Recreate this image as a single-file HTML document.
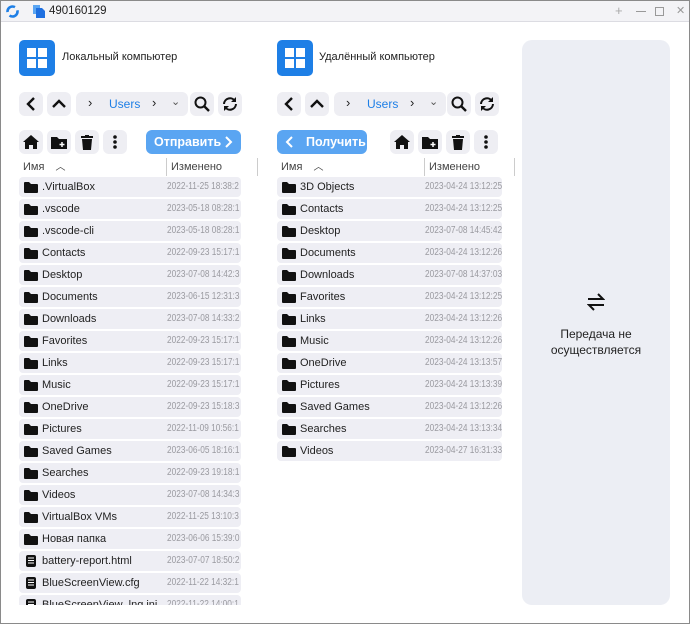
<!DOCTYPE html>
<html><head><meta charset="utf-8"><style>
*{box-sizing:border-box;margin:0;padding:0}
body{width:690px;height:624px;background:#fff;font-family:"Liberation Sans","Noto Sans CJK SC",sans-serif;position:relative;overflow:hidden;color:#222}
.win{position:absolute;left:0;top:0;width:690px;height:624px;border:1px solid #8a8a8a}
.title{position:absolute;left:1px;top:1px;width:688px;height:21px;background:#f3f3f6;border-bottom:1px solid #dcdce2}
.a{position:absolute}
.btn{position:absolute;width:24px;height:24px;background:#eeeef3;border-radius:6px;display:flex;align-items:center;justify-content:center}
.crumb{position:absolute;height:24px;background:#eeeef3;border-radius:6px}
.list{position:absolute;top:177px;height:428px;overflow:hidden}
.row{height:20px;margin-bottom:2px;background:#eeeef4;border-radius:4px;position:relative;font-size:11px;line-height:20px;white-space:nowrap;overflow:hidden}
.row .n{position:absolute;left:23px;color:#222}
.row .d{position:absolute;color:#9a9aa0;font-size:10px;transform:scaleX(0.83);transform-origin:0 50%}
.row svg{position:absolute;left:5px;top:5px}
.hdr{position:absolute;top:158px;height:18px;font-size:11px;color:#444;line-height:18px}
.send{position:absolute;height:24px;background:#5aa5f2;border-radius:6px;color:#fff;font-size:12.5px;font-weight:bold;line-height:24px}
</style></head><body>
<div class="win"></div>
<div class="title">
 <svg class="a" style="left:5px;top:4px" width="13" height="13" viewBox="0 0 13 13"><circle cx="6.5" cy="6.5" r="5" fill="none" stroke="#1e7fe6" stroke-width="2.6" stroke-dasharray="11 4"/></svg>
 <svg class="a" style="left:32px;top:4px" width="12" height="13" viewBox="0 0 12 13"><rect x="0" y="0" width="7" height="9" fill="#5aa5f2"/><path d="M3 3h6l3 3v7H3z" fill="#1e6fe0"/></svg>
 <div class="a" style="left:48px;top:4px;font-size:11.5px;color:#222">490160129</div>
 <div class="a" style="left:614px;top:2px;font-size:13px;color:#aaa">+</div>
 <div class="a" style="left:635px;top:10px;width:10px;height:1px;background:#999"></div>
 <div class="a" style="left:654px;top:6px;width:9px;height:9px;border:1px solid #999"></div>
 <div class="a" style="left:675px;top:3px;font-size:11px;color:#999">✕</div>
</div>

<div class="a" style="left:19px;top:40px;width:36px;height:36px;background:#1e7fe6;border-radius:5px"></div>
<svg class="a" style="left:27px;top:48px" width="20" height="20" viewBox="0 0 20 20" fill="#fff"><rect x="0" y="0" width="9" height="9"/><rect x="11" y="0" width="9" height="9"/><rect x="0" y="11" width="9" height="9"/><rect x="11" y="11" width="9" height="9"/></svg>
<div class="a" style="left:62px;top:51px;font-size:11px">Локальный компьютер</div>

<div class="a" style="left:277px;top:40px;width:36px;height:36px;background:#1e7fe6;border-radius:5px"></div>
<svg class="a" style="left:285px;top:48px" width="20" height="20" viewBox="0 0 20 20" fill="#fff"><rect x="0" y="0" width="9" height="9"/><rect x="11" y="0" width="9" height="9"/><rect x="0" y="11" width="9" height="9"/><rect x="11" y="11" width="9" height="9"/></svg>
<div class="a" style="left:319px;top:51px;font-size:11px">Удалённый компьютер</div>

<div class="btn" style="left:19px;top:92px"><svg width="12" height="14" viewBox="0 0 12 14"><path d="M9 1L3 7l6 6" fill="none" stroke="#111" stroke-width="2.4"/></svg></div>
<div class="btn" style="left:47px;top:92px"><svg width="14" height="12" viewBox="0 0 14 12"><path d="M1 9l6-6 6 6" fill="none" stroke="#111" stroke-width="2.4"/></svg></div>
<div class="crumb" style="left:76px;top:92px;width:112px"><span class="a" style="left:12px;top:3px;font-size:13px">›</span><span class="a" style="left:33px;top:5px;font-size:12px;color:#1e7fe6">Users</span><span class="a" style="left:76px;top:3px;font-size:13px">›</span><span class="a" style="left:95px;top:3px;font-size:11px;color:#555">⌄</span></div>
<div class="btn" style="left:190px;top:92px"><svg width="16" height="16" viewBox="0 0 16 16"><circle cx="6.5" cy="6.5" r="5" fill="none" stroke="#111" stroke-width="2"/><path d="M10 10l5 5" stroke="#111" stroke-width="2.4"/></svg></div>
<div class="btn" style="left:218px;top:92px"><svg width="16" height="16" viewBox="0 0 16 16"><path d="M2 8a6 6 0 0 1 11-3M14 8a6 6 0 0 1-11 3" fill="none" stroke="#111" stroke-width="2"/><path d="M14 1v5h-5M2 15v-5h5" fill="#111"/></svg></div>

<div class="btn" style="left:277px;top:92px"><svg width="12" height="14" viewBox="0 0 12 14"><path d="M9 1L3 7l6 6" fill="none" stroke="#111" stroke-width="2.4"/></svg></div>
<div class="btn" style="left:305px;top:92px"><svg width="14" height="12" viewBox="0 0 14 12"><path d="M1 9l6-6 6 6" fill="none" stroke="#111" stroke-width="2.4"/></svg></div>
<div class="crumb" style="left:334px;top:92px;width:112px"><span class="a" style="left:12px;top:3px;font-size:13px">›</span><span class="a" style="left:33px;top:5px;font-size:12px;color:#1e7fe6">Users</span><span class="a" style="left:76px;top:3px;font-size:13px">›</span><span class="a" style="left:95px;top:3px;font-size:11px;color:#555">⌄</span></div>
<div class="btn" style="left:447px;top:92px"><svg width="16" height="16" viewBox="0 0 16 16"><circle cx="6.5" cy="6.5" r="5" fill="none" stroke="#111" stroke-width="2"/><path d="M10 10l5 5" stroke="#111" stroke-width="2.4"/></svg></div>
<div class="btn" style="left:475px;top:92px"><svg width="16" height="16" viewBox="0 0 16 16"><path d="M2 8a6 6 0 0 1 11-3M14 8a6 6 0 0 1-11 3" fill="none" stroke="#111" stroke-width="2"/><path d="M14 1v5h-5M2 15v-5h5" fill="#111"/></svg></div>

<div class="btn" style="left:19px;top:130px"><svg width="16" height="14" viewBox="0 0 16 14"><path d="M8 0L0 7h2v7h4v-4h4v4h4V7h2z" fill="#111"/></svg></div>
<div class="btn" style="left:47px;top:130px"><svg width="16" height="13" viewBox="0 0 16 13"><path d="M0 1h6l2 2h8v10H0z" fill="#111"/><path d="M11 6v5M8.5 8.5h5" stroke="#fff" stroke-width="1.5"/></svg></div>
<div class="btn" style="left:75px;top:130px"><svg width="12" height="15" viewBox="0 0 12 15"><rect x="0" y="1" width="12" height="2" fill="#111"/><rect x="4" y="0" width="4" height="2" fill="#111"/><path d="M1 4h10l-1 11H2z" fill="#111"/></svg></div>
<div class="btn" style="left:103px;top:130px"><svg width="4" height="14" viewBox="0 0 4 14" fill="#111"><circle cx="2" cy="2" r="1.8"/><circle cx="2" cy="7" r="1.8"/><circle cx="2" cy="12" r="1.8"/></svg></div>
<div class="send" style="left:146px;top:130px;width:95px"><span class="a" style="left:8px">Отправить</span><svg class="a" style="left:79px;top:6px" width="8" height="12" viewBox="0 0 8 12"><path d="M1 1l5 5-5 5" fill="none" stroke="#fff" stroke-width="2"/></svg></div>

<div class="send" style="left:277px;top:130px;width:90px"><svg class="a" style="left:8px;top:6px" width="8" height="12" viewBox="0 0 8 12"><path d="M7 1L2 6l5 5" fill="none" stroke="#fff" stroke-width="2"/></svg><span class="a" style="left:29px">Получить</span></div>
<div class="btn" style="left:390px;top:130px"><svg width="16" height="14" viewBox="0 0 16 14"><path d="M8 0L0 7h2v7h4v-4h4v4h4V7h2z" fill="#111"/></svg></div>
<div class="btn" style="left:418px;top:130px"><svg width="16" height="13" viewBox="0 0 16 13"><path d="M0 1h6l2 2h8v10H0z" fill="#111"/><path d="M11 6v5M8.5 8.5h5" stroke="#fff" stroke-width="1.5"/></svg></div>
<div class="btn" style="left:446px;top:130px"><svg width="12" height="15" viewBox="0 0 12 15"><rect x="0" y="1" width="12" height="2" fill="#111"/><rect x="4" y="0" width="4" height="2" fill="#111"/><path d="M1 4h10l-1 11H2z" fill="#111"/></svg></div>
<div class="btn" style="left:474px;top:130px"><svg width="4" height="14" viewBox="0 0 4 14" fill="#111"><circle cx="2" cy="2" r="1.8"/><circle cx="2" cy="7" r="1.8"/><circle cx="2" cy="12" r="1.8"/></svg></div>

<div class="hdr" style="left:23px">Имя <span style="font-size:10px;margin-left:8px">︿</span></div>
<div class="a" style="left:166px;top:158px;width:1px;height:18px;background:#ccc"></div>
<div class="hdr" style="left:171px">Изменено</div>
<div class="a" style="left:257px;top:158px;width:1px;height:18px;background:#ccc"></div>
<div class="hdr" style="left:281px">Имя <span style="font-size:10px;margin-left:8px">︿</span></div>
<div class="a" style="left:424px;top:158px;width:1px;height:18px;background:#ccc"></div>
<div class="hdr" style="left:429px">Изменено</div>
<div class="a" style="left:514px;top:158px;width:1px;height:18px;background:#ccc"></div>

<svg width="0" height="0" style="position:absolute"><defs>
<symbol id="f" viewBox="0 0 14 11"><path d="M0 1q0-1 1-1h4l2 2h6q1 0 1 1v7q0 1-1 1H1q-1 0-1-1z" fill="#111"/></symbol>
<symbol id="doc" viewBox="0 0 10 12"><rect x="0" y="0" width="10" height="12" rx="2" fill="#111"/><path d="M2 3h6M2 5.5h6M2 8h6" stroke="#fff" stroke-width="1"/></symbol>
</defs></svg>

<div class="list" style="left:19px;width:222px">
<div class="row"><svg width="14" height="11"><use href="#f"/></svg><span class="n">.VirtualBox</span><span class="d" style="left:148px">2022-11-25 18:38:2</span></div>
<div class="row"><svg width="14" height="11"><use href="#f"/></svg><span class="n">.vscode</span><span class="d" style="left:148px">2023-05-18 08:28:1</span></div>
<div class="row"><svg width="14" height="11"><use href="#f"/></svg><span class="n">.vscode-cli</span><span class="d" style="left:148px">2023-05-18 08:28:1</span></div>
<div class="row"><svg width="14" height="11"><use href="#f"/></svg><span class="n">Contacts</span><span class="d" style="left:148px">2022-09-23 15:17:1</span></div>
<div class="row"><svg width="14" height="11"><use href="#f"/></svg><span class="n">Desktop</span><span class="d" style="left:148px">2023-07-08 14:42:3</span></div>
<div class="row"><svg width="14" height="11"><use href="#f"/></svg><span class="n">Documents</span><span class="d" style="left:148px">2023-06-15 12:31:3</span></div>
<div class="row"><svg width="14" height="11"><use href="#f"/></svg><span class="n">Downloads</span><span class="d" style="left:148px">2023-07-08 14:33:2</span></div>
<div class="row"><svg width="14" height="11"><use href="#f"/></svg><span class="n">Favorites</span><span class="d" style="left:148px">2022-09-23 15:17:1</span></div>
<div class="row"><svg width="14" height="11"><use href="#f"/></svg><span class="n">Links</span><span class="d" style="left:148px">2022-09-23 15:17:1</span></div>
<div class="row"><svg width="14" height="11"><use href="#f"/></svg><span class="n">Music</span><span class="d" style="left:148px">2022-09-23 15:17:1</span></div>
<div class="row"><svg width="14" height="11"><use href="#f"/></svg><span class="n">OneDrive</span><span class="d" style="left:148px">2022-09-23 15:18:3</span></div>
<div class="row"><svg width="14" height="11"><use href="#f"/></svg><span class="n">Pictures</span><span class="d" style="left:148px">2022-11-09 10:56:1</span></div>
<div class="row"><svg width="14" height="11"><use href="#f"/></svg><span class="n">Saved Games</span><span class="d" style="left:148px">2023-06-05 18:16:1</span></div>
<div class="row"><svg width="14" height="11"><use href="#f"/></svg><span class="n">Searches</span><span class="d" style="left:148px">2022-09-23 19:18:1</span></div>
<div class="row"><svg width="14" height="11"><use href="#f"/></svg><span class="n">Videos</span><span class="d" style="left:148px">2023-07-08 14:34:3</span></div>
<div class="row"><svg width="14" height="11"><use href="#f"/></svg><span class="n">VirtualBox VMs</span><span class="d" style="left:148px">2022-11-25 13:10:3</span></div>
<div class="row"><svg width="14" height="11"><use href="#f"/></svg><span class="n">Новая папка</span><span class="d" style="left:148px">2023-06-06 15:39:0</span></div>
<div class="row"><svg width="10" height="12" style="left:7px;top:4px"><use href="#doc"/></svg><span class="n">battery-report.html</span><span class="d" style="left:148px">2023-07-07 18:50:2</span></div>
<div class="row"><svg width="10" height="12" style="left:7px;top:4px"><use href="#doc"/></svg><span class="n">BlueScreenView.cfg</span><span class="d" style="left:148px">2022-11-22 14:32:1</span></div>
<div class="row"><svg width="10" height="12" style="left:7px;top:4px"><use href="#doc"/></svg><span class="n">BlueScreenView_lng.ini</span><span class="d" style="left:148px">2022-11-22 14:00:1</span></div>
</div>

<div class="list" style="left:277px;width:225px">
<div class="row"><svg width="14" height="11"><use href="#f"/></svg><span class="n">3D Objects</span><span class="d" style="left:148px">2023-04-24 13:12:25</span></div>
<div class="row"><svg width="14" height="11"><use href="#f"/></svg><span class="n">Contacts</span><span class="d" style="left:148px">2023-04-24 13:12:25</span></div>
<div class="row"><svg width="14" height="11"><use href="#f"/></svg><span class="n">Desktop</span><span class="d" style="left:148px">2023-07-08 14:45:42</span></div>
<div class="row"><svg width="14" height="11"><use href="#f"/></svg><span class="n">Documents</span><span class="d" style="left:148px">2023-04-24 13:12:26</span></div>
<div class="row"><svg width="14" height="11"><use href="#f"/></svg><span class="n">Downloads</span><span class="d" style="left:148px">2023-07-08 14:37:03</span></div>
<div class="row"><svg width="14" height="11"><use href="#f"/></svg><span class="n">Favorites</span><span class="d" style="left:148px">2023-04-24 13:12:25</span></div>
<div class="row"><svg width="14" height="11"><use href="#f"/></svg><span class="n">Links</span><span class="d" style="left:148px">2023-04-24 13:12:26</span></div>
<div class="row"><svg width="14" height="11"><use href="#f"/></svg><span class="n">Music</span><span class="d" style="left:148px">2023-04-24 13:12:26</span></div>
<div class="row"><svg width="14" height="11"><use href="#f"/></svg><span class="n">OneDrive</span><span class="d" style="left:148px">2023-04-24 13:13:57</span></div>
<div class="row"><svg width="14" height="11"><use href="#f"/></svg><span class="n">Pictures</span><span class="d" style="left:148px">2023-04-24 13:13:39</span></div>
<div class="row"><svg width="14" height="11"><use href="#f"/></svg><span class="n">Saved Games</span><span class="d" style="left:148px">2023-04-24 13:12:26</span></div>
<div class="row"><svg width="14" height="11"><use href="#f"/></svg><span class="n">Searches</span><span class="d" style="left:148px">2023-04-24 13:13:34</span></div>
<div class="row"><svg width="14" height="11"><use href="#f"/></svg><span class="n">Videos</span><span class="d" style="left:148px">2023-04-27 16:31:33</span></div>
</div>

<div class="a" style="left:522px;top:40px;width:148px;height:565px;background:#eceef4;border-radius:10px"></div>
<svg class="a" style="left:587px;top:293px" width="18" height="18" viewBox="0 0 18 18"><path d="M1 6h15l-5-5M17 12H2l5 5" fill="none" stroke="#111" stroke-width="2"/></svg>
<div class="a" style="left:522px;top:326px;width:148px;text-align:center;font-size:12px;line-height:16px;color:#222">Передача не<br>осуществляется</div>
</body></html>
